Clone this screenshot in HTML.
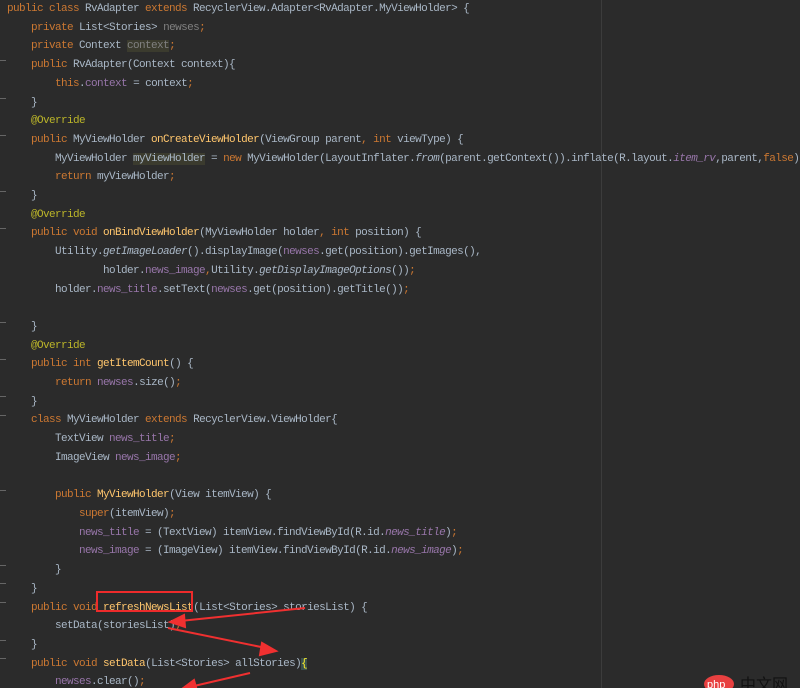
<!DOCTYPE html>
<html><head><meta charset="utf-8"><style>
html,body{margin:0;padding:0;background:#2b2b2b;width:800px;height:688px;overflow:hidden;position:relative}
pre{position:absolute;left:7px;top:0px;margin:0;font-family:"Liberation Mono","Noto Sans CJK SC",monospace;font-size:11px;letter-spacing:-0.6px;line-height:18.7px;color:#a9b7c6;white-space:pre}
.k{color:#cc7832}.f{color:#9876aa}.m{color:#ffc66d}.a{color:#bbb529}.i{font-style:italic}.g{color:#808080}
.hl{background:#3b3b2e}
.vline{position:absolute;left:601px;top:0;width:1px;height:688px;background:#3c3c3c}
.gut{position:absolute;left:0;width:6px;height:8px;border-top:1px solid #666;}
</style></head><body>
<div class="vline"></div>
<pre><span class="k">public class</span> RvAdapter <span class="k">extends</span> RecyclerView.Adapter&lt;RvAdapter.MyViewHolder&gt; {
    <span class="k">private</span> List&lt;Stories&gt; <span class="g">newses</span><span class="k">;</span>
    <span class="k">private</span> Context <span class="g hl">context</span><span class="k">;</span>
    <span class="k">public</span> RvAdapter(Context context){
        <span class="k">this</span>.<span class="f">context</span> = context<span class="k">;</span>
    }
    <span class="a">@Override</span>
    <span class="k">public</span> MyViewHolder <span class="m">onCreateViewHolder</span>(ViewGroup parent<span class="k">, int</span> viewType) {
        MyViewHolder <span class="hl">myViewHolder</span> = <span class="k">new</span> MyViewHolder(LayoutInflater.<span class="i">from</span>(parent.getContext()).inflate(R.layout.<span class="f i">item_rv</span>,parent,<span class="k">false</span>))<span class="k">;</span>
        <span class="k">return</span> myViewHolder<span class="k">;</span>
    }
    <span class="a">@Override</span>
    <span class="k">public void</span> <span class="m">onBindViewHolder</span>(MyViewHolder holder<span class="k">, int</span> position) {
        Utility.<span class="i">getImageLoader</span>().displayImage(<span class="f">newses</span>.get(position).getImages(),
                holder.<span class="f">news_image</span><span class="k">,</span>Utility.<span class="i">getDisplayImageOptions</span>())<span class="k">;</span>
        holder.<span class="f">news_title</span>.setText(<span class="f">newses</span>.get(position).getTitle())<span class="k">;</span>

    }
    <span class="a">@Override</span>
    <span class="k">public int</span> <span class="m">getItemCount</span>() {
        <span class="k">return</span> <span class="f">newses</span>.size()<span class="k">;</span>
    }
    <span class="k">class</span> MyViewHolder <span class="k">extends</span> RecyclerView.ViewHolder{
        TextView <span class="f">news_title</span><span class="k">;</span>
        ImageView <span class="f">news_image</span><span class="k">;</span>

        <span class="k">public</span> <span class="m">MyViewHolder</span>(View itemView) {
            <span class="k">super</span>(itemView)<span class="k">;</span>
            <span class="f">news_title</span> = (TextView) itemView.findViewById(R.id.<span class="f i">news_title</span>)<span class="k">;</span>
            <span class="f">news_image</span> = (ImageView) itemView.findViewById(R.id.<span class="f i">news_image</span>)<span class="k">;</span>
        }
    }
    <span class="k">public void</span> <span class="m">refreshNewsList</span>(List&lt;Stories&gt; storiesList) {
        setData(storiesList)<span class="k">;</span>
    }
    <span class="k">public void</span> <span class="m">setData</span>(List&lt;Stories&gt; allStories)<span style="background:#3b514d;color:#ffef28">{</span>
        <span class="f">newses</span>.clear()<span class="k">;</span>
</pre>
<div class="gut" style="top:60px"></div><div class="gut" style="top:98px"></div>
<div class="gut" style="top:135px"></div><div class="gut" style="top:191px"></div>
<div class="gut" style="top:228px"></div><div class="gut" style="top:322px"></div>
<div class="gut" style="top:359px"></div><div class="gut" style="top:396px"></div>
<div class="gut" style="top:415px"></div><div class="gut" style="top:490px"></div>
<div class="gut" style="top:565px"></div><div class="gut" style="top:583px"></div>
<div class="gut" style="top:602px"></div><div class="gut" style="top:640px"></div>
<div class="gut" style="top:658px"></div>
<div style="position:absolute;left:96px;top:591px;width:97px;height:21px;border:2px solid #ee2b2b;box-sizing:border-box"></div>
<svg style="position:absolute;left:0;top:0" width="800" height="688">
<g stroke="#f03030" stroke-width="2" fill="#f03030">
<line x1="305" y1="608" x2="180" y2="621"/><polygon points="170,622 184,615 185,627"/>
<line x1="168" y1="628" x2="266" y2="648"/><polygon points="276,651 262,643 260,655"/>
<line x1="250" y1="673" x2="194" y2="686"/><polygon points="182,689 194,680 197,691"/>
</g>
<ellipse cx="719" cy="684" rx="15" ry="9" fill="#e84040"/>
<text x="707" y="688" font-family="Liberation Sans,sans-serif" font-size="11" fill="#fff">php</text>
<text x="740" y="690" font-family="Liberation Sans,Noto Sans CJK SC,sans-serif" font-size="16" fill="#111">中文网</text>
</svg>
</body></html>
